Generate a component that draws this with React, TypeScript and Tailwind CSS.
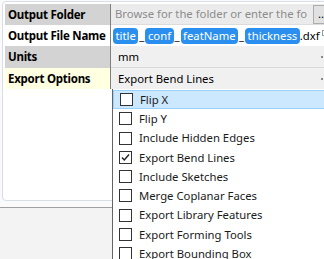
const options = [
  { label: "Flip X", checked: false },
  { label: "Flip Y", checked: false },
  { label: "Include Hidden Edges", checked: false },
  { label: "Export Bend Lines", checked: true },
  { label: "Include Sketches", checked: false },
  { label: "Merge Coplanar Faces", checked: false },
  { label: "Export Library Features", checked: false },
  { label: "Export Forming Tools", checked: false },
  { label: "Export Bounding Box", checked: false },
];

const Token = ({ text }: { text: string }) => (
  <span className="flex h-[16px] items-center rounded-[4px] bg-[#2b8ff0] px-[2.5px] text-white">
    {text}
  </span>
);

const Arrow = () => (
  <span className="ml-auto mr-[1px] h-[2px] w-[2px] bg-[#8a8a8a]" />
);

const labelCls =
  "flex w-[106px] items-center whitespace-nowrap border-r border-[#808080] pl-[3px] text-[11.5px] font-bold tracking-[-0.25px]";

const App = () => {
  return (
    <div className="relative h-[259px] w-[324px] overflow-hidden bg-[#f3f3f3] font-['Noto_Sans',sans-serif] text-[11.3px] leading-none text-black">
      <div className="h-[208px] border-b border-[#a0a0a0] bg-[#fafafa] pt-px pl-[2px]">
        <div className="h-[200px] w-[340px] rounded-[4px] border border-[#d6dee7] bg-white pt-[2px] pl-[2px]">
          {/* Output Folder */}
          <div className="flex h-[21px]">
            <div className={`${labelCls} bg-[#d3d3d3]`}>Output Folder</div>
            <div className="flex flex-1 items-center border-b border-[#dcdcdc] bg-[#ebebeb] pl-[4px] text-[#8c8c8c]">
              <span className="w-[197px] overflow-hidden whitespace-nowrap">
                Browse for the folder or enter the fo
              </span>
              <span className="ml-[1px] flex h-[19px] w-[24px] items-center border border-[#adadad] bg-[#e1e1e1] pl-[4px] text-black">
                ...
              </span>
            </div>
          </div>

          {/* Output File Name */}
          <div className="flex h-[21px]">
            <div className={`${labelCls} bg-white`}>Output File Name</div>
            <div className="flex flex-1 items-center whitespace-nowrap bg-white pl-[2px]">
              <Token text="title" />
              <span className="px-[1px]">_</span>
              <Token text="conf" />
              <span className="px-[1px]">_</span>
              <Token text="featName" />
              <span className="px-[1px]">_</span>
              <Token text="thickness" />
              <span>.dxf</span>
              <span className="mb-[6px] ml-[2px] h-[6px] w-[6px] border border-[#9a9a9a]" />
            </div>
          </div>

          {/* Units */}
          <div className="flex h-[22px]">
            <div className={`${labelCls} bg-[#d3d3d3]`}>Units</div>
            <div className="flex w-[213px] items-center border-b border-[#d9d9d9] bg-[#f0f0f0] pl-[7px]">
              mm
              <Arrow />
            </div>
          </div>

          {/* Export Options */}
          <div className="flex h-[21px]">
            <div className={`${labelCls} bg-[#ffffe1]`}>Export Options</div>
            <div className="flex w-[213px] items-center bg-[#f0f0f0] pl-[7px]">
              Export Bend Lines
              <Arrow />
            </div>
          </div>
        </div>
      </div>

      {/* dropdown list */}
      <div className="absolute left-[112px] top-[89px] h-[180px] w-[220px] border-l border-[#646464] bg-white pt-px">
        {options.map((item, index) => (
          <div
            key={item.label}
            className={`flex h-[19.25px] items-center gap-[7px] pl-[6px] ${
              index === 0 ? "border border-[#99d1ff] bg-[#cce8ff] pl-[5px]" : ""
            }`}
          >
            <span className="flex h-[13px] w-[13px] shrink-0 items-center justify-center border border-[#333333] bg-white">
              {item.checked && (
                <svg width="11" height="11" viewBox="0 0 11 11">
                  <path d="M2 5.5 L4.3 8 L9 2.5" fill="none" stroke="#222" strokeWidth="1.4" />
                </svg>
              )}
            </span>
            <span className="whitespace-nowrap text-[#1a1a1a]">{item.label}</span>
          </div>
        ))}
      </div>
    </div>
  );
};

export default App;
